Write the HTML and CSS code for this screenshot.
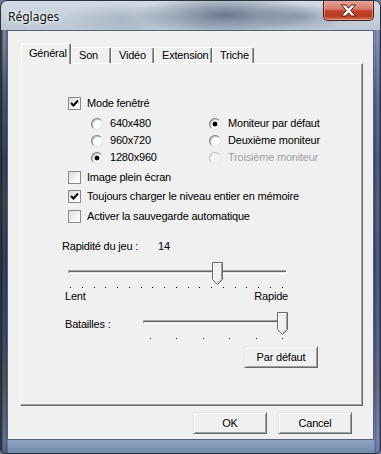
FILE: index.html
```html
<!DOCTYPE html>
<html lang="fr">
<head>
<meta charset="utf-8">
<title>Réglages</title>
<link rel="stylesheet" href="styles.css">
</head>
<body>
<div class="window">
  <div class="titlebar">
    <span class="title">Réglages</span>
    <div class="close">
      <svg width="17" height="13" viewBox="0 0 17 13"><path d="M1.5 1 L5.8 1 L8.5 4.2 L11.2 1 L15.5 1 L10.8 6.5 L15.5 12 L11.2 12 L8.5 8.8 L5.8 12 L1.5 12 L6.2 6.5 Z" fill="#fff" stroke="#5a1a12" stroke-width="1" stroke-linejoin="round"/></svg>
    </div>
  </div>
  <div class="client">
    <div class="tabs">
      <div class="tab active w-gen">Général</div>
      <div class="tab w-son">Son</div>
      <div class="tab w-vid">Vidéo</div>
      <div class="tab w-ext">Extension</div>
      <div class="tab w-tri">Triche</div>
    </div>
    <div class="panel">
      <div class="check-row first"><span class="cb checked"><svg width="9" height="9" viewBox="0 0 9 9"><path d="M1 4 L3.5 6.5 L8 1.5" fill="none" stroke="#000" stroke-width="2"/></svg></span><span>Mode fenêtré</span></div>
      <div class="radio-grid">
        <div class="radio-row"><span class="rb"></span><span>640x480</span></div>
        <div class="radio-row"><span class="rb on"></span><span>Moniteur par défaut</span></div>
        <div class="radio-row"><span class="rb"></span><span>960x720</span></div>
        <div class="radio-row"><span class="rb"></span><span>Deuxième moniteur</span></div>
        <div class="radio-row"><span class="rb on"></span><span>1280x960</span></div>
        <div class="radio-row disabled"><span class="rb"></span><span>Troisième moniteur</span></div>
      </div>
      <div class="checks">
        <div class="check-row"><span class="cb"></span><span>Image plein écran</span></div>
        <div class="check-row"><span class="cb checked"><svg width="9" height="9" viewBox="0 0 9 9"><path d="M1 4 L3.5 6.5 L8 1.5" fill="none" stroke="#000" stroke-width="2"/></svg></span><span>Toujours charger le niveau entier en mémoire</span></div>
        <div class="check-row"><span class="cb"></span><span>Activer la sauvegarde automatique</span></div>
      </div>
      <div class="speed-row"><span class="speed-label">Rapidité du jeu :</span><span>14</span></div>
      <div class="slider s1">
        <div class="track"></div>
        <svg class="thumb t1" width="11" height="23" viewBox="0 0 11 23"><path d="M0.5 0.5 H10.5 V17.5 L5.5 22.5 L0.5 17.5 Z" fill="#f0f0f0" stroke="#696969"/><path d="M1.5 17 V1.5 H9.5" fill="none" stroke="#fff"/><path d="M9.5 1.5 V17.2 L5.5 21.2" fill="none" stroke="#a0a0a0"/></svg>
        <div class="ticks">
          <i></i><i></i><i></i><i></i><i></i><i></i><i></i><i></i><i></i><i></i><i></i><i></i><i></i><i></i><i></i><i></i><i></i><i></i><i></i>
        </div>
      </div>
      <div class="range-labels"><span>Lent</span><span>Rapide</span></div>
      <div class="battle-row">
        <span class="battle-label">Batailles :</span>
        <div class="slider s2">
          <div class="track"></div>
          <svg class="thumb t2" width="11" height="23" viewBox="0 0 11 23"><path d="M0.5 0.5 H10.5 V17.5 L5.5 22.5 L0.5 17.5 Z" fill="#f0f0f0" stroke="#696969"/><path d="M1.5 17 V1.5 H9.5" fill="none" stroke="#fff"/><path d="M9.5 1.5 V17.2 L5.5 21.2" fill="none" stroke="#a0a0a0"/></svg>
          <div class="ticks">
            <i></i><i></i><i></i><i></i><i></i><i></i>
          </div>
        </div>
      </div>
      <button class="btn default-btn">Par défaut</button>
    </div>
    <div class="buttons">
      <button class="btn">OK</button>
      <button class="btn">Cancel</button>
    </div>
  </div>
</div>
</body>
</html>
```

FILE: styles.css
```css
* { box-sizing: border-box; }
html, body { margin: 0; padding: 0; }
body {
  width: 381px;
  height: 454px;
  overflow: hidden;
  font-family: "Liberation Sans", Arial, sans-serif;
  font-size: 11px;
  letter-spacing: -0.2px;
  color: #000;
  background: #6b7a90;
}
.window {
  width: 381px;
  height: 454px;
  border: 1px solid #2a3140;
  border-radius: 7px 7px 5px 5px;
  display: flex;
  flex-direction: column;
  overflow: hidden;
  background:
    linear-gradient(to right, rgba(20,26,40,.85) 0, rgba(70,90,110,.5) 3px, rgba(30,40,70,.6) 6px, transparent 7px, transparent 373px, rgba(60,75,140,.7) 374px, rgba(120,130,170,.6) 377px, rgba(30,40,70,.8) 380px),
    linear-gradient(to bottom, #c5cfda 0, #b4c0ce 40px, #5b6a7e 90px, #2d3a4c 160px, #3e4a3e 200px, #28344a 260px, #3a4a6a 330px, #6a6050 380px, #8fa3c0 440px, #6f83a6 454px);
}
.titlebar {
  height: 29px;
  flex: none;
  display: flex;
  align-items: flex-start;
  justify-content: space-between;
  background:
    radial-gradient(ellipse 90px 20px at 225px 14px, rgba(55,70,100,.65), transparent),
    radial-gradient(ellipse 50px 14px at 300px 16px, rgba(90,105,135,.45), transparent),
    radial-gradient(ellipse 60px 16px at 120px 18px, rgba(120,135,160,.35), transparent),
    linear-gradient(to bottom, #d3dbe4, #bcc7d4);
}
.title {
  font-family: "Noto Sans", "Open Sans", sans-serif;
  font-size: 12px;
  letter-spacing: 0;
  line-height: 16px;
  margin: 8px 0 0 7px;
  color: #101010;
  text-shadow: 0 0 6px #fff, 0 0 3px #fff;
}
.close {
  width: 51px;
  height: 21px;
  margin: -1px 6px 0 0;
  border: 1px solid #4a1a14;
  border-top: none;
  border-radius: 0 0 5px 5px;
  background: linear-gradient(to bottom, #e7a89c 0, #d77b69 45%, #c0412a 55%, #b83b24 80%, #d2735a 100%);
  box-shadow: inset 0 0 0 1px rgba(255,200,190,.5);
  display: flex;
  align-items: center;
  justify-content: center;
}
.client {
  flex: 1;
  margin: 0 6px 13px 6px;
  background: #f0f0f0;
  border: 1px solid #56627a;
  display: flex;
  flex-direction: column;
  padding: 12px 0 0 12px;
}
.tabs {
  display: flex;
  align-items: flex-end;
  height: 20px;
  padding-left: 1px;
}
.tab {
  height: 16px;
  border-top: 1px solid #fff;
  border-left: 1px solid #fff;
  border-right: 1px solid #696969;
  box-shadow: inset -1px 0 #a0a0a0;
  border-radius: 2px 2px 0 0;
  padding-left: 7px;
  line-height: 14px;
}
.tab.active {
  height: 21px;
  margin-bottom: -1px;
  background: #f0f0f0;
  position: relative;
  z-index: 1;
  line-height: 18px;
}
.w-gen { width: 50px; }
.w-son { width: 40px; }
.w-vid { width: 43px; }
.w-ext { width: 58px; }
.w-tri { width: 42px; }
.panel {
  width: 343px;
  height: 343px;
  border: 1px solid;
  border-color: #fff #696969 #696969 #fff;
  box-shadow: inset -1px -1px #a0a0a0;
  display: flex;
  flex-direction: column;
  align-items: flex-start;
  padding-top: 33px;
}
.check-row {
  display: flex;
  align-items: center;
  gap: 6px;
  height: 13px;
  line-height: 13px;
  margin-left: 47px;
}
.cb {
  width: 13px;
  height: 13px;
  flex: none;
  border: 1px solid #8a8a8a;
  background: linear-gradient(135deg, #d8d8d8, #f6f6f6 60%, #fff);
  display: flex;
  align-items: center;
  justify-content: center;
}
.radio-grid {
  margin: 5px 0 0 70px;
  display: grid;
  grid-template-columns: 118px auto;
  grid-auto-rows: 17px;
}
.radio-row {
  display: flex;
  align-items: center;
  gap: 7px;
  line-height: 13px;
}
.radio-row.disabled { color: #a0a0a0; }
.rb {
  width: 12px;
  height: 12px;
  flex: none;
  border-radius: 50%;
  border: 1px solid;
  border-color: #808080 #e3e3e3 #e3e3e3 #808080;
  background: radial-gradient(circle at 60% 60%, #fff 40%, #e8e8e8);
  box-shadow: inset 1px 1px #c0c0c0;
  display: flex;
  align-items: center;
  justify-content: center;
}
.rb.on::after {
  content: "";
  width: 4px;
  height: 4px;
  border-radius: 50%;
  background: #000;
  box-shadow: 0 0 0 0.5px #333;
}
.disabled .rb { border-color: #b8b8b8 #ececec #ececec #b8b8b8; box-shadow: none; background: #f4f4f4; }
.checks {
  margin-top: 5px;
  display: flex;
  flex-direction: column;
  gap: 6px;
}
.checks .check-row:last-child { margin-top: 1px; }
.speed-row {
  margin: 17px 0 0 41px;
  height: 13px;
  line-height: 13px;
  display: flex;
}
.speed-label { width: 96px; }
.slider {
  position: relative;
  flex: none;
}
.slider.s1 {
  margin: 9px 0 0 47px;
  width: 220px;
  height: 28px;
}
.track {
  position: absolute;
  left: 0;
  right: 1px;
  top: 8px;
  height: 4px;
  border-top: 1px solid #a0a0a0;
  border-left: 1px solid #a0a0a0;
  border-bottom: 1px solid #fff;
  border-right: 1px solid #fff;
  background: #e3e3e3;
  box-shadow: inset 0 1px #696969;
}
.thumb { position: absolute; top: 0; }
.t1 { left: 144px; }
.ticks {
  position: absolute;
  left: 0;
  right: 0;
  top: 25px;
  display: flex;
  justify-content: space-between;
}
.s1 .ticks { padding: 0 5px 0 2px; }
.ticks i {
  display: block;
  width: 1px;
  height: 1px;
  background: #000;
}
.range-labels {
  margin: 0 0 0 44px;
  width: 223px;
  height: 13px;
  line-height: 13px;
  display: flex;
  justify-content: space-between;
}
.battle-row {
  margin: 9px 0 0 44px;
  display: flex;
  align-items: flex-start;
}
.battle-label {
  width: 78px;
  margin-top: 6px;
  line-height: 13px;
}
.slider.s2 {
  width: 145px;
  height: 30px;
}
.s2 .ticks { top: 26px; padding: 0 5px 0 7px; }
.t2 { left: 134px; }
.btn {
  font-family: inherit;
  font-size: 11px;
  letter-spacing: -0.2px;
  color: #000;
  width: 74px;
  height: 22px;
  padding: 0;
  background: #f0f0f0;
  border: 1px solid;
  border-color: #e3e3e3 #696969 #696969 #e3e3e3;
  box-shadow: inset 1px 1px #fff, inset -1px -1px #a0a0a0;
}
.default-btn {
  margin: 4px 0 0 223px;
}
.buttons {
  display: flex;
  justify-content: flex-end;
  gap: 11px;
  padding-right: 21px;
  margin-top: 6px;
}
```
